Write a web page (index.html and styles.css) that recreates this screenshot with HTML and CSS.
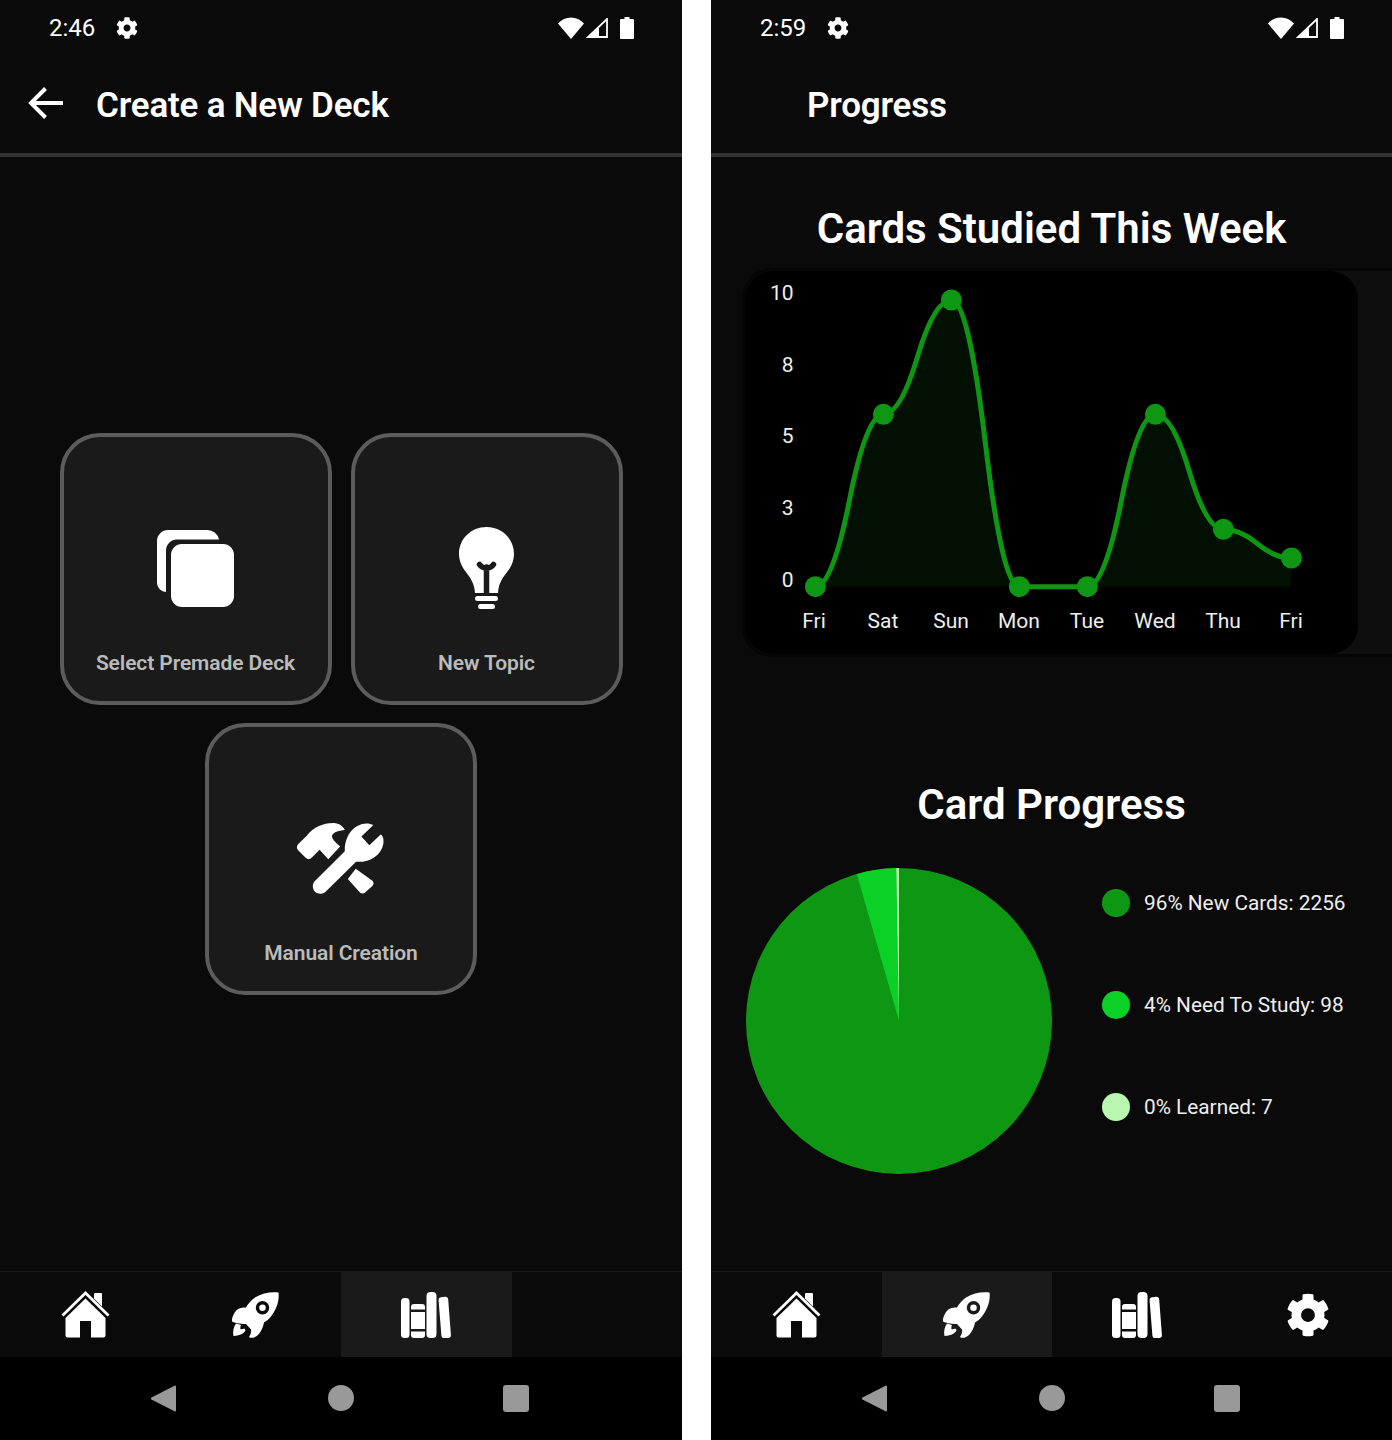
FILE: index.html
```html
<!DOCTYPE html>
<html lang="en">

<head>
    <meta charset="UTF-8">
    <title>Flashcards</title>
    <link rel="stylesheet" href="styles.css">
</head>

<body>
    <svg class="defs">
        <defs>
            <symbol id="gear" viewBox="0 0 512 512">
                <path d="M487.4 315.7l-42.6-24.6c4.3-23.2 4.3-47 0-70.2l42.6-24.6c4.9-2.8 7.1-8.6 5.5-14-11.1-35.6-30-67.8-54.7-94.6-3.8-4.1-10-5.1-14.8-2.3L380.8 110c-17.9-15.4-38.5-27.3-60.8-35.1V25.8c0-5.6-3.9-10.5-9.4-11.7-36.7-8.2-74.3-7.8-109.2 0-5.5 1.2-9.4 6.1-9.4 11.7V75c-22.2 7.9-42.8 19.8-60.8 35.1L88.7 85.5c-4.9-2.8-11-1.9-14.8 2.3-24.7 26.7-43.6 58.9-54.7 94.6-1.7 5.4.6 11.2 5.5 14L67.3 221c-4.3 23.2-4.3 47 0 70.2l-42.6 24.6c-4.9 2.8-7.1 8.6-5.5 14 11.1 35.6 30 67.8 54.7 94.6 3.8 4.1 10 5.1 14.8 2.3l42.6-24.6c17.9 15.4 38.5 27.3 60.8 35.1v49.2c0 5.6 3.9 10.5 9.4 11.7 36.7 8.2 74.3 7.8 109.2 0 5.5-1.2 9.4-6.1 9.4-11.7v-49.2c22.2-7.9 42.8-19.8 60.8-35.1l42.6 24.6c4.9 2.8 11 1.9 14.8-2.3 24.7-26.7 43.6-58.9 54.7-94.6 1.5-5.5-.7-11.3-5.6-14.1zM256 336c-44.1 0-80-35.9-80-80s35.9-80 80-80 80 35.9 80 80-35.9 80-80 80z" fill="#fff"/>
            </symbol>
            <symbol id="wifi" viewBox="0 0 26 22">
                <path d="M13 22L0 6.5C3.5 2.5 8 .5 13 .5s9.500 2 13 6z" fill="#fff"/>
            </symbol>
            <symbol id="signal" viewBox="0 0 22 20">
                <path d="M21 1v18H2z" fill="none" stroke="#fff" stroke-width="1.800"/>
                <path d="M13 9.500V19H3z" fill="#fff"/>
            </symbol>
            <symbol id="battery" viewBox="0 0 14 22">
                <path d="M4.500 0h5v2H13a1 1 0 0 1 1 1v18a1 1 0 0 1-1 1H1a1 1 0 0 1-1-1V3a1 1 0 0 1 1-1h3.500z" fill="#fff"/>
            </symbol>
            <symbol id="home" viewBox="0 0 49 47">
                <path d="M1.500 24.500L24.500 2l23 22.500" fill="none" stroke="#fff" stroke-width="2.800"/>
                <path d="M33 7.500V3a1 1 0 0 1 1-1h6a1 1 0 0 1 1 1v12.500z" fill="#fff"/>
                <path d="M24.500 7.500L44.500 27v17.500a2 2 0 0 1-2 2H30V30H19v16.500H6.500a2 2 0 0 1-2-2V27z" fill="#fff"/>
            </symbol>
            <symbol id="rocket" viewBox="0 0 47 46">
                <path d="M46.500.5C47.500 8 45 17 38.500 25c-1.500 2-4 4-6.500 5.500-1 6-4.500 13-10 15-2 .5-4 .5-5-.5 1.500-2 2.500-5 2-7.500l-5-5.500C11 32 4 31.500 0 29.500c-.5-4 2.500-10 6-12.500 2.500-1.500 5.500-1.500 8-1.500C16 12 19 8 23 5.500 30 1 39 -.5 46.500.5z" fill="#fff"/>
                <circle cx="30.500" cy="15.700" r="5" fill="none" stroke="currentColor" stroke-width="3.500"/>
                <path d="M4 31.500c2 .5 4 1 5 1.500-.5 1.500-1 3-.5 4 1 .5 2.500 0 4-.5l1 2c-1.500 2.500-4.500 5-12 5.500C.5 40 1.500 35 4 31.500z" fill="#fff"/>
            </symbol>
            <symbol id="books" viewBox="0 0 50 46">
                <rect x="0" y="6" width="8.500" height="40" rx="3.500" fill="#fff"/>
                <path d="M10 17.500V15a3 3 0 0 1 3-3h8a3 3 0 0 1 3 3v2.500zM10 20h14v17H10zM10 39.500h14V43a3 3 0 0 1-3 3h-8a3 3 0 0 1-3-3z" fill="#fff"/>
                <rect x="25.500" y="0" width="10" height="46" rx="4" fill="#fff"/>
                <path d="M37.600 8.500a3 3 0 0 1 2.700-3.300l3.600-.4a3 3 0 0 1 3.300 2.700l2.700 35.200a3 3 0 0 1-2.800 3.300l-3.600.2a3 3 0 0 1-3.100-2.800z" fill="#fff"/>
            </symbol>
        </defs>
    </svg>

    <div class="phone">
        <div class="status-bar">
            <span class="status-time">2:46</span>
            <svg class="status-gear"><use href="#gear"/></svg>
            <span class="status-right">
                <svg class="icon-wifi"><use href="#wifi"/></svg>
                <svg class="icon-signal"><use href="#signal"/></svg>
                <svg class="icon-battery"><use href="#battery"/></svg>
            </span>
        </div>
        <div class="header">
            <svg class="back-arrow" viewBox="0 0 36 32"><path d="M35 16H4M17.500 1.500L3 16l14.500 14.500" fill="none" stroke="#fff" stroke-width="4"/></svg>
            <span class="header-title">Create a New Deck</span>
        </div>
        <div class="content content-center">
            <div class="card-grid">
                <div class="option-card">
                    <svg class="card-icon icon-copy" viewBox="0 0 77 77">
                        <path d="M9 62A9 9 0 0 1 0 53V11A11 11 0 0 1 11 0h39a12 12 0 0 1 12 9.500H20A11 11 0 0 0 9 20.500z" fill="#fff"/>
                        <rect x="14" y="14" width="63" height="63" rx="11" fill="#fff"/>
                    </svg>
                    <span class="card-label">Select Premade Deck</span>
                </div>
                <div class="option-card">
                    <svg class="card-icon icon-bulb" viewBox="0 0 55 82">
                        <path d="M27.500 0C12 0 0 12 0 27c0 6 2 11 5 15.500 4 5.500 10.500 12 11 23.500h23c.5-11.500 7-18 11-23.500 3-4.500 5-9.500 5-15.500C55 12 43 0 27.500 0z" fill="#fff"/>
                        <path d="M20.500 37.500c2 3 4.500 3.500 7 3.500s5-.5 7-3.500M27.500 40v26" fill="none" stroke="#1a1a1a" stroke-width="5.500" stroke-linecap="round"/>
                        <rect x="16" y="69" width="23" height="5" rx="2.500" fill="#fff"/>
                        <rect x="19" y="77" width="17" height="5" rx="2.500" fill="#fff"/>
                    </svg>
                    <span class="card-label">New Topic</span>
                </div>
                <div class="option-card">
                    <svg class="card-icon icon-tools" viewBox="290 306 266 220">
                        <path d="M296 372L322 347C340 322 372 308 404 309C418 310 430 318 436 330C418 332 402 336 398 346C394 354 406 366 422 380L386 418L360 390L336 414C330 420 324 420 318 414L296 392C290 386 290 378 296 372z" fill="#fff"/>
                        <path d="M469 447L518 482C524 487 524 494 519 499L498 518C492 523 486 523 481 518L445 478z" fill="#fff"/>
                        <path d="M346 484L436 394C434 360 452 322 488 312C500 309 512 310 522 315L486 350L510 376L544 344C552 348 554 360 552 372C546 406 512 428 470 426L378 516C368 525 352 524 344 514C338 504 338 492 346 484z" fill="#fff"/>
                    </svg>
                    <span class="card-label">Manual Creation</span>
                </div>
            </div>
        </div>
        <div class="tab-bar">
            <div class="tab"><svg class="tab-home"><use href="#home"/></svg></div>
            <div class="tab"><svg class="tab-rocket"><use href="#rocket"/></svg></div>
            <div class="tab active"><svg class="tab-books"><use href="#books"/></svg></div>
            <div class="tab"></div>
        </div>
        <div class="nav-bar">
            <svg class="nav-back" viewBox="0 0 25 27"><path d="M24 .5a1 1 0 0 1 1 1v24a1 1 0 0 1-1 1L.5 14.500a1.200 1.200 0 0 1 0-2z" fill="#999"/></svg>
            <span class="nav-home"></span>
            <span class="nav-square"></span>
        </div>
    </div>

    <div class="phone">
        <div class="status-bar">
            <span class="status-time">2:59</span>
            <svg class="status-gear"><use href="#gear"/></svg>
            <span class="status-right">
                <svg class="icon-wifi"><use href="#wifi"/></svg>
                <svg class="icon-signal"><use href="#signal"/></svg>
                <svg class="icon-battery"><use href="#battery"/></svg>
            </span>
        </div>
        <div class="header">
            <span class="header-title no-back">Progress</span>
        </div>
        <div class="content">
            <h2 class="section-title">Cards Studied This Week</h2>
            <div class="chart-scroll">
                <div class="chart-box">
                    <svg class="line-chart" viewBox="3 1 613 383">
                        <path class="chart-fill" d="M73.400 316.700Q90.400 316.700 107.400 230.500Q124.400 144.300 141.400 144.300Q158.400 144.300 175.400 87.150Q192.400 30 209.400 30Q226.400 30 243.400 173.350Q260.400 316.700 277.400 316.700L345.400 316.700Q362.400 316.700 379.400 230.500Q396.400 144.300 413.400 144.300Q430.400 144.300 447.400 201.800Q464.400 259.300 481.400 259.300Q498.400 259.300 515.400 273.650Q532.400 288 549.400 288V316.700Z"/>
                        <path class="chart-line" d="M73.400 316.700Q90.400 316.700 107.400 230.500Q124.400 144.300 141.400 144.300Q158.400 144.300 175.400 87.150Q192.400 30 209.400 30Q226.400 30 243.400 173.350Q260.400 316.700 277.400 316.700L345.400 316.700Q362.400 316.700 379.400 230.500Q396.400 144.300 413.400 144.300Q430.400 144.300 447.400 201.800Q464.400 259.300 481.400 259.300Q498.400 259.300 515.400 273.650Q532.400 288 549.400 288"/>
                        <g class="chart-dots">
                            <circle cx="73.400" cy="316.700" r="10.500"/>
                            <circle cx="141.400" cy="144.300" r="10.500"/>
                            <circle cx="209.400" cy="30" r="10.500"/>
                            <circle cx="277.400" cy="316.700" r="10.500"/>
                            <circle cx="345.400" cy="316.700" r="10.500"/>
                            <circle cx="413.400" cy="144.300" r="10.500"/>
                            <circle cx="481.400" cy="259.300" r="10.500"/>
                            <circle cx="549.400" cy="288" r="10.500"/>
                        </g>
                        <g class="y-labels">
                            <text x="51.500" y="30">10</text>
                            <text x="51.500" y="101.700">8</text>
                            <text x="51.500" y="173.400">5</text>
                            <text x="51.500" y="245.100">3</text>
                            <text x="51.500" y="316.800">0</text>
                        </g>
                        <g class="x-labels">
                            <text x="72" y="358">Fri</text>
                            <text x="141" y="358">Sat</text>
                            <text x="209" y="358">Sun</text>
                            <text x="277" y="358">Mon</text>
                            <text x="345" y="358">Tue</text>
                            <text x="413" y="358">Wed</text>
                            <text x="481" y="358">Thu</text>
                            <text x="549" y="358">Fri</text>
                        </g>
                    </svg>
                </div>
            </div>
            <h2 class="section-title progress-title">Card Progress</h2>
            <div class="pie-row">
                <svg class="pie" viewBox="0 0 306 306">
                    <circle cx="153" cy="153" r="153" fill="#0e9713"/>
                    <path d="M153 153L110.800 5.900A153 153 0 0 1 150.300 0z" fill="#0bd025"/>
                    <path d="M153 153L150.300 0A153 153 0 0 1 153 0z" fill="#b9f7b0"/>
                </svg>
                <div class="legend">
                    <div class="legend-row"><span class="legend-dot dot-new"></span>96% New Cards: 2256</div>
                    <div class="legend-row"><span class="legend-dot dot-study"></span>4% Need To Study: 98</div>
                    <div class="legend-row"><span class="legend-dot dot-learned"></span>0% Learned: 7</div>
                </div>
            </div>
        </div>
        <div class="tab-bar">
            <div class="tab"><svg class="tab-home"><use href="#home"/></svg></div>
            <div class="tab active"><svg class="tab-rocket"><use href="#rocket"/></svg></div>
            <div class="tab"><svg class="tab-books"><use href="#books"/></svg></div>
            <div class="tab"><svg class="tab-gear"><use href="#gear"/></svg></div>
        </div>
        <div class="nav-bar">
            <svg class="nav-back" viewBox="0 0 25 27"><path d="M24 .5a1 1 0 0 1 1 1v24a1 1 0 0 1-1 1L.5 14.500a1.200 1.200 0 0 1 0-2z" fill="#999"/></svg>
            <span class="nav-home"></span>
            <span class="nav-square"></span>
        </div>
    </div>
</body>

</html>
```

FILE: styles.css
```css
* {
    box-sizing: border-box;
}

body {
    margin: 0;
    width: 1392px;
    height: 1440px;
    overflow: hidden;
    background-color: #fff;
    display: flex;
    justify-content: space-between;
    font-family: Roboto, "Liberation Sans", sans-serif;
}

.defs {
    position: absolute;
    width: 0;
    height: 0;
}

.phone {
    width: 682px;
    height: 1440px;
    background-color: #0a0a0a;
    display: flex;
    flex-direction: column;
    color: #fff;
}

.phone + .phone {
    width: 681px;
}

/* status bar */
.status-bar {
    height: 55px;
    flex: none;
    display: flex;
    align-items: center;
    padding: 0 48px 0 49px;
}

.status-time {
    font-size: 24px;
    width: 67px;
    padding-top: 1px;
}

.status-gear {
    width: 22px;
    height: 22px;
}

.status-right {
    margin-left: auto;
    display: flex;
    align-items: center;
}

.icon-wifi {
    width: 26px;
    height: 22px;
}

.icon-signal {
    width: 22px;
    height: 20px;
    margin-left: 2px;
}

.icon-battery {
    width: 14px;
    height: 22px;
    margin-left: 12px;
}

/* header */
.header {
    height: 102px;
    flex: none;
    border-bottom: 4px solid #333;
    display: flex;
    align-items: center;
    padding: 2px 0 0 28px;
}

.back-arrow {
    width: 36px;
    height: 32px;
    margin-right: 32px;
    margin-top: -4px;
}

.header-title {
    font-size: 35px;
    font-weight: 600;
    letter-spacing: -0.2px;
}

.no-back {
    margin-left: 68px;
}

.content {
    flex: 1;
    min-height: 0;
}

.content-center {
    display: flex;
    align-items: center;
    justify-content: center;
}

/* deck options */
.card-grid {
    width: 563px;
    display: flex;
    flex-wrap: wrap;
    justify-content: center;
    gap: 18px 19px;
}

.option-card {
    width: 272px;
    height: 272px;
    border: 4px solid #5c5c5c;
    border-radius: 40px;
    background-color: #1a1a1a;
    display: flex;
    flex-direction: column;
    align-items: center;
    position: relative;
}

.card-icon {
    position: absolute;
}

.icon-copy {
    width: 77px;
    height: 77px;
    top: 93px;
    left: 93px;
}

.icon-bulb {
    width: 55px;
    height: 82px;
    top: 90px;
    left: 104px;
}

.icon-tools {
    width: 89px;
    height: 73px;
    top: 95px;
    left: 87px;
}

.card-label {
    margin-top: 214px;
    font-size: 21px;
    font-weight: 600;
    letter-spacing: -0.1px;
    color: #bbb;
}

/* progress */
.section-title {
    margin: 47px 0 0;
    font-size: 42px;
    line-height: 50px;
    font-weight: 600;
    text-align: center;
}

.chart-scroll {
    margin: 14px 0 0 31px;
    height: 389px;
    border: 3px solid #050505;
    border-right: none;
    border-radius: 30px 0 0 30px;
    background-color: #0e0e0e;
}

.chart-box {
    width: 613px;
    height: 383px;
    background-color: #000;
    border-radius: 28px;
}

.line-chart {
    display: block;
    width: 613px;
    height: 383px;
    font-size: 21px;
}

.chart-fill {
    fill: #021004;
}

.chart-line {
    fill: none;
    stroke: #0e9713;
    stroke-width: 5;
}

.chart-dots circle {
    fill: #0e9713;
}

.y-labels text {
    fill: #eee;
    text-anchor: end;
}

.x-labels text {
    fill: #eee;
    text-anchor: middle;
}

.progress-title {
    margin-top: 123px;
}

.pie-row {
    display: flex;
    margin: 38px 0 0 35px;
}

.pie {
    width: 306px;
    height: 306px;
    flex: none;
}

.legend {
    margin: 20px 0 0 50px;
}

.legend-row {
    display: flex;
    align-items: center;
    height: 30px;
    margin-bottom: 72px;
    font-size: 20.800px;
    color: #eee;
    white-space: nowrap;
}

.legend-dot {
    width: 28px;
    height: 28px;
    border-radius: 50%;
    margin-right: 14px;
    flex: none;
}

.dot-new {
    background-color: #0e9713;
}

.dot-study {
    background-color: #0bd025;
}

.dot-learned {
    background-color: #b9f7b0;
}

/* bottom tabs */
.tab-bar {
    height: 86px;
    flex: none;
    display: flex;
    border-top: 1px solid #1a1a1a;
}

.tab {
    flex: none;
    width: 170.5px;
    display: flex;
    align-items: center;
    justify-content: center;
    color: #0a0a0a;
}

.tab.active {
    background-color: #1a1a1a;
    color: #1a1a1a;
}

.tab-home {
    width: 49px;
    height: 47px;
}

.tab-rocket {
    width: 47px;
    height: 46px;
}

.tab-books {
    width: 50px;
    height: 46px;
}

.tab-gear {
    width: 44px;
    height: 46px;
}

/* android nav bar */
.nav-bar {
    height: 83px;
    flex: none;
    background-color: #000;
    display: flex;
    align-items: center;
    justify-content: center;
    gap: 152px;
    padding: 0 2px 1px 0;
}

.nav-back {
    width: 25px;
    height: 27px;
}

.nav-home {
    width: 26px;
    height: 26px;
    border-radius: 50%;
    background-color: #999;
}

.nav-square {
    width: 26px;
    height: 27px;
    margin-left: -3px;
    border-radius: 3px;
    background-color: #999;
}
```
